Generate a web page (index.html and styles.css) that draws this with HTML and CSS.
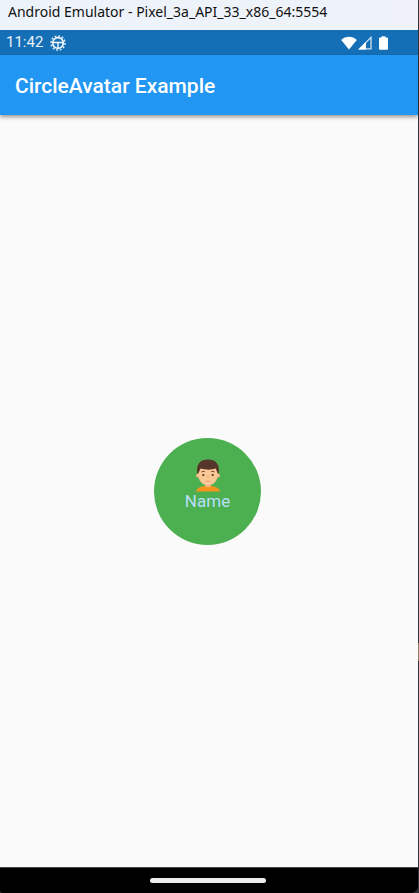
FILE: index.html
```html
<!DOCTYPE html>
<html lang="en">
<head>
<meta charset="utf-8">
<meta name="viewport" content="width=device-width, initial-scale=1">
<title>Android Emulator</title>
<link rel="stylesheet" href="styles.css">
</head>
<body>
<div class="window">
  <div class="titlebar">Android Emulator - Pixel_3a_API_33_x86_64:5554</div>
  <div class="statusbar">
    <span class="clock">11:42</span>
    <svg class="gear" viewBox="0 0 16 16" aria-hidden="true">
      <circle cx="8" cy="8" r="7" fill="none" stroke="#dcebf7" stroke-width="1.6" stroke-dasharray="1.8 1.865"/>
      <circle cx="8" cy="8" r="5.3" fill="none" stroke="#f4f9fd" stroke-width="1.7"/>
      <path d="M3 7.5H13M8 8V13" fill="none" stroke="#f4f9fd" stroke-width="1.4"/>
    </svg>
    <div class="indicators">
      <svg class="wifi" viewBox="0 0 16 14" aria-hidden="true">
        <path d="M0.2 3.9C4.6-0.3 11.4-0.3 15.8 3.9L8 13.4Z" fill="#fff"/>
      </svg>
      <svg class="signal" viewBox="0 0 14 14" aria-hidden="true">
        <path d="M1.5 12.9L13 1.4V12.9Z" fill="none" stroke="#cfe2f1" stroke-width="1.3"/>
        <path d="M0.4 13.5L8 6V13.5Z" fill="#fff"/>
      </svg>
      <svg class="battery" viewBox="0 0 9 14" aria-hidden="true">
        <path d="M2.6 0.3H6.4V1.5H8Q9 1.5 9 2.5V12.8Q9 13.8 8 13.8H1Q0 13.8 0 12.8V2.5Q0 1.5 1 1.5H2.6Z" fill="#fff"/>
      </svg>
    </div>
  </div>
  <header class="appbar"><h1>CircleAvatar Example</h1></header>
  <main class="content">
    <div class="avatar">
      <svg class="person" viewBox="0 0 26 33" role="img" aria-label="Person">
        <path d="M1 32.5C1.5 29 6 27.4 10 27H16C20 27.4 24.5 29 25 32.5Z" fill="#f7941e"/>
        <path d="M10 24H16V27.2Q13 29.4 10 27.2Z" fill="#f0b07c"/>
        <circle cx="3" cy="16.5" r="2" fill="#f5b98a"/>
        <circle cx="23" cy="16.5" r="2" fill="#f5b98a"/>
        <path d="M3.4 8H22.6V16C22.6 22 18 26.4 13 26.4S3.4 22 3.4 16Z" fill="#fbc896"/>
        <path d="M2.5 15C0.7 6 4.5 0.8 12.5 0.6C21.5 0.4 25.3 6 23.5 15L22.3 13.5L20.8 9.6C15.5 11.4 10 10.8 5.5 9.6L3.8 13.5Z" fill="#56352b"/>
        <path d="M6.6 12.9Q8.2 11.8 9.8 12.7M16.2 12.7Q17.8 11.8 19.4 12.9" fill="none" stroke="#684331" stroke-width="1"/>
        <circle cx="8.3" cy="16" r="1.1" fill="#493027"/>
        <circle cx="17.7" cy="16" r="1.1" fill="#493027"/>
        <path d="M13 16V19.3" stroke="#efb17e" stroke-width="1"/>
        <path d="M10.8 22Q13 23.2 15.2 22" fill="none" stroke="#e99a7a" stroke-width="1"/>
      </svg>
      <span class="name">Name</span>
    </div>
  </main>
  <div class="navbar"><div class="handle"></div></div>
</div>
</body>
</html>
```
FILE: styles.css
```css
* {
  box-sizing: border-box;
}

body {
  margin: 0;
  background: linear-gradient(#303133 72%, #8d7b60 72%, #8d7b60 74%, #303133 74%);
  font-family: Roboto, "Liberation Sans", sans-serif;
}

.window {
  display: flex;
  flex-direction: column;
  min-height: 100vh;
  margin-right: 1px;
}

.titlebar {
  height: 30px;
  padding-left: 8px;
  background: linear-gradient(90deg, #edf3fb, #eff3f9);
  color: #111;
  font-family: "Noto Sans", "Open Sans", sans-serif;
  font-size: 14px;
  line-height: 24px;
  white-space: nowrap;
}

.statusbar {
  display: flex;
  align-items: center;
  height: 25px;
  padding: 0 30px 0 6px;
  background: #146fb6;
}

.clock {
  color: #e8f1f8;
  font-size: 15px;
  line-height: 25px;
}

.gear {
  width: 16px;
  height: 16px;
  margin-left: 7px;
}

.indicators {
  display: flex;
  align-items: center;
  margin-left: auto;
}

.wifi {
  width: 16px;
  height: 14px;
}

.signal {
  width: 14px;
  height: 14px;
  margin-left: 1px;
}

.battery {
  width: 9px;
  height: 14px;
  margin-left: 7px;
}

.appbar {
  display: flex;
  align-items: center;
  height: 60px;
  padding: 2px 15px 0;
  background: #2196f3;
  box-shadow: 0 2px 4px rgba(0, 0, 0, 0.4);
  z-index: 1;
}

.appbar h1 {
  margin: 0;
  color: #fff;
  font-size: 21px;
  font-weight: 500;
  line-height: 28px;
}

.content {
  display: flex;
  flex: 1;
  align-items: center;
  justify-content: center;
  padding-right: 3px;
  background: #fafafa;
}

.avatar {
  display: flex;
  flex-direction: column;
  align-items: center;
  justify-content: center;
  width: 107px;
  height: 107px;
  padding-bottom: 14px;
  border-radius: 50%;
  background: #4caf50;
}

.person {
  width: 26px;
  height: 33px;
}

.name {
  color: #bbdefb;
  font-size: 17px;
  line-height: 18px;
}

.navbar {
  display: flex;
  align-items: center;
  justify-content: center;
  height: 26px;
  padding-right: 3px;
  border-top: 1px solid #444;
  border-radius: 0 0 7px 3px;
  background: #000;
}

.handle {
  width: 116px;
  height: 5px;
  border-radius: 3px;
  background: #ececec;
}
```
